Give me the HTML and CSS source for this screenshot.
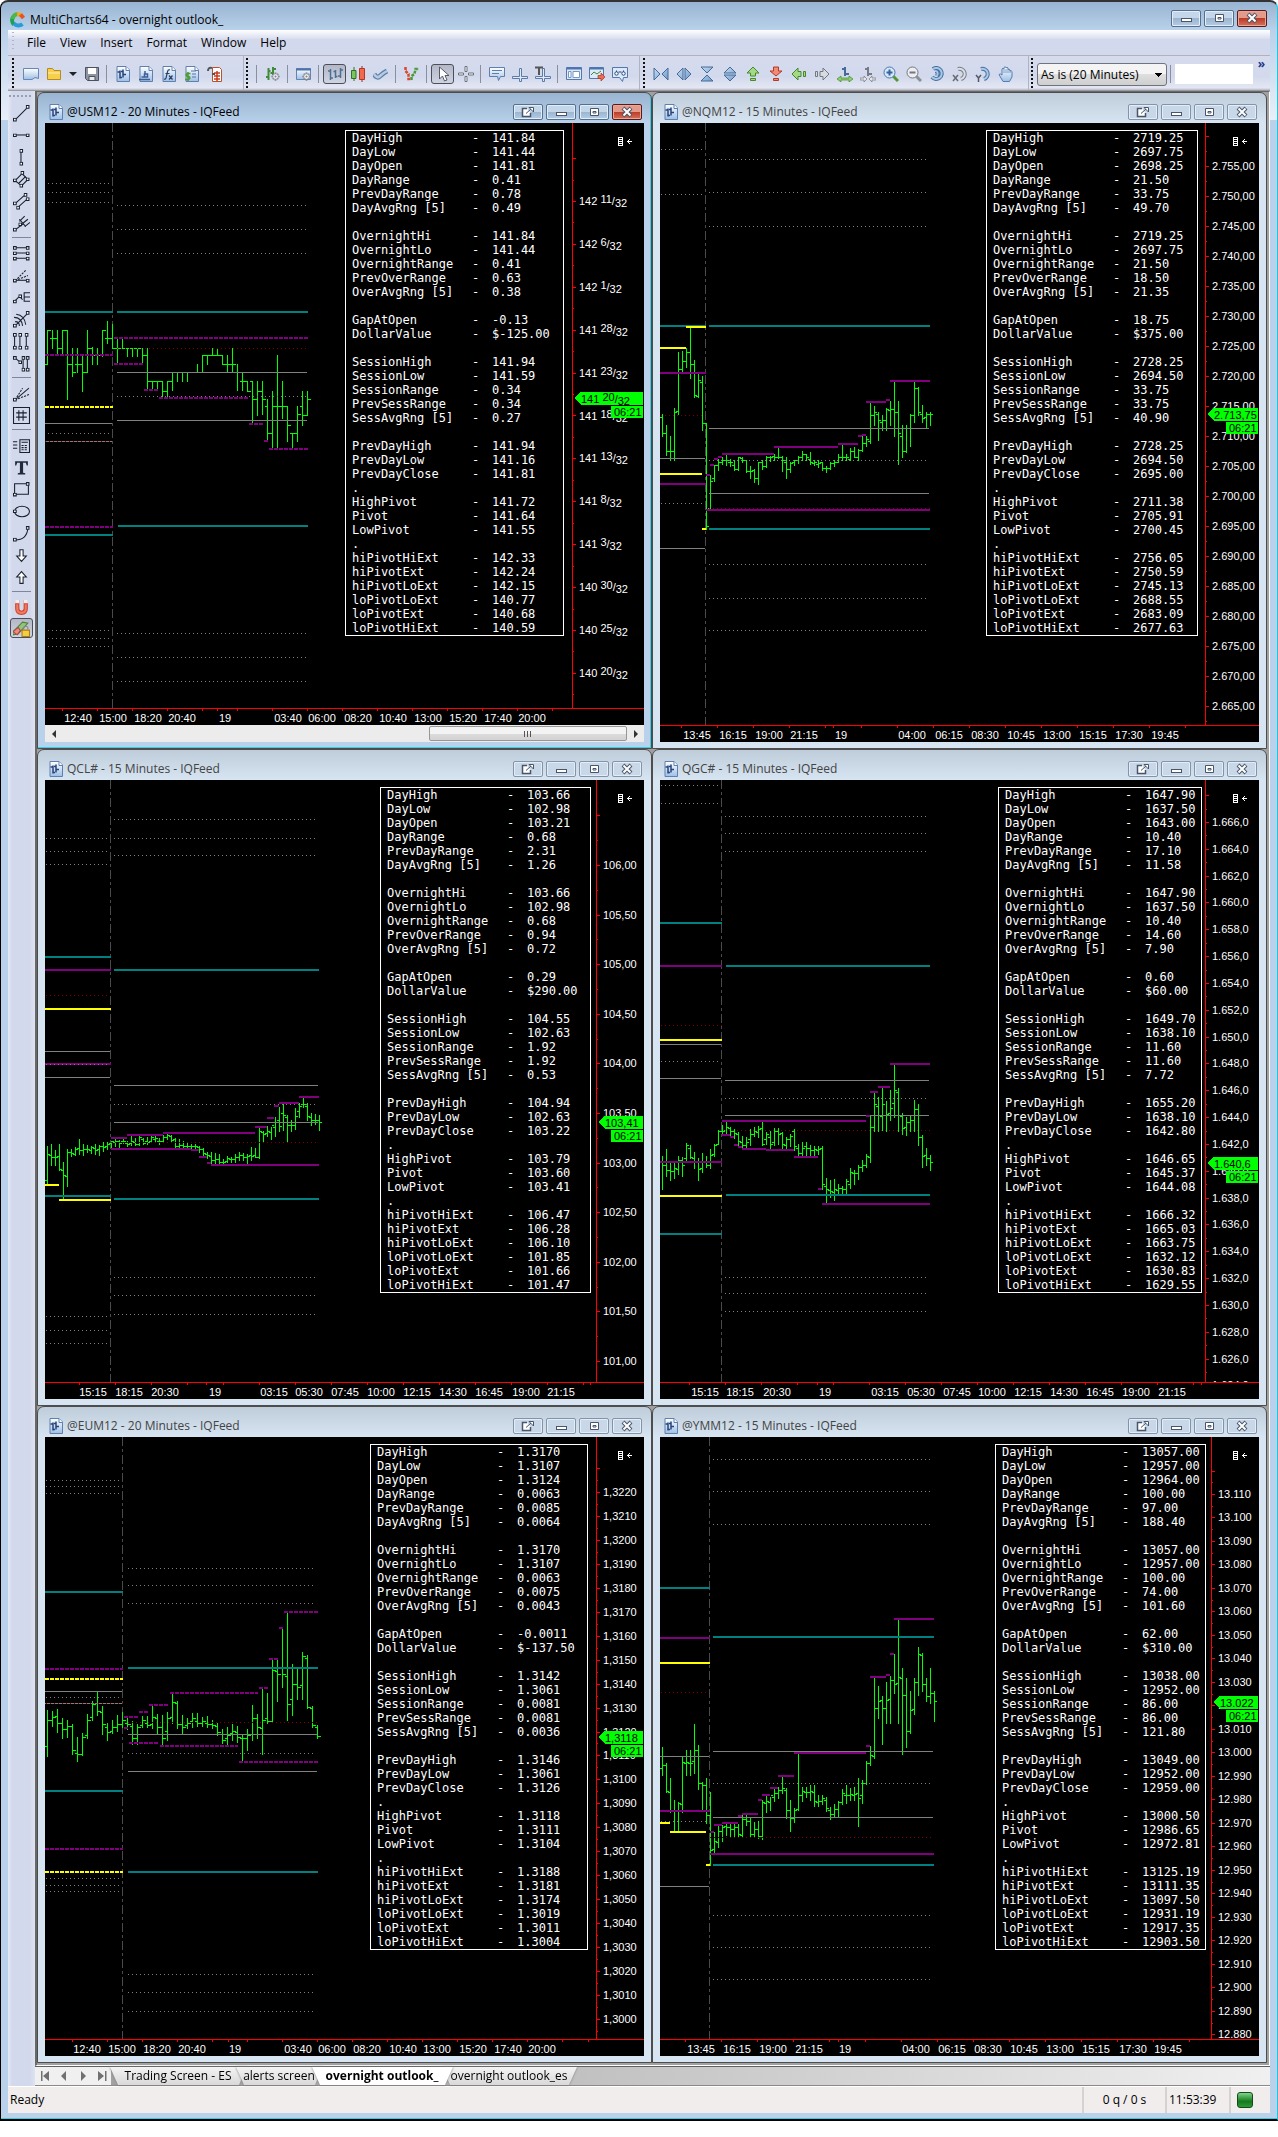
FILE: index.html
```html
<!DOCTYPE html>
<html lang="en">
<head>
<meta charset="utf-8">
<title>MultiCharts64 - overnight outlook_</title>
<link rel="stylesheet" href="styles.css">
</head>
<body>
<svg class="sprite" aria-hidden="true">
  <defs>
    <linearGradient id="blue" x2="0" y2="1"><stop offset="0" stop-color="#fff"/><stop offset="1" stop-color="#9dbfe6"/></linearGradient>
    <linearGradient id="steel" x2="1" y2="1"><stop offset="0" stop-color="#c8dcf2"/><stop offset="1" stop-color="#6f9ccb"/></linearGradient>
  </defs>
  <symbol id="logo" viewBox="0 0 16 16"><g fill="none" stroke-width="4"><path d="M4 12.5A6 6 0 0 1 3 5" stroke="#1fa05a"/><path d="M2.5 7A6 6 0 0 1 8 2" stroke="#4cb748"/><path d="M7 2.2A6 6 0 0 1 11.500 3.500" stroke="#f4a51c"/><path d="M10.500 2.500L13.500 6" stroke="#e8541e"/><path d="M4 11.500A6 6 0 0 0 12.500 12" stroke="#2a9bd6"/></g></symbol>
  <symbol id="page" viewBox="0 0 16 16"><path d="M2 .5h9l3.500 3.500v11.500H2z" fill="url(#blue)" stroke="#5f7fae"/><path d="M11 .5v4h3.500" fill="#fff" stroke="#5f7fae"/></symbol>
  <symbol id="chartdoc" viewBox="0 0 16 16"><use href="#page"/><path d="M5 4.500v8M2.500 6H5M5 11.500h2M8 3.500v8M8 8.500h3M6 5.500h2" stroke="#27447c" stroke-width="1.500"/></symbol>
  <symbol id="new" viewBox="0 0 16 16"><path d="M.5 2.500h15v10L12 11.500 9 13.500H.5z" fill="url(#blue)" stroke="#6787b5"/></symbol>
  <symbol id="open" viewBox="0 0 16 16"><path d="M1.500 13.500v-11h5l1.500 2h6.500v9z" fill="#f6cf4d" stroke="#b88a1e"/><path d="M2 7h12" stroke="#fff0b0"/></symbol>
  <symbol id="caret" viewBox="0 0 8 16"><path d="M0 6h8L4 10z" fill="#222"/></symbol>
  <symbol id="save" viewBox="0 0 16 16"><path d="M1.500 1.500h13v13h-11l-2-2z" fill="#8d93a0" stroke="#4c515c"/><path d="M4 2h8v6H4z" fill="#fff"/><path d="M5 10.500h6v4H5z" fill="#e8ebf0" stroke="#4c515c"/></symbol>
  <symbol id="signal" viewBox="0 0 16 16"><use href="#page"/><path d="M1 13.500h11M3.500 11h6v-3h-3v3M7 5v3" fill="none" stroke="#3c5f96" stroke-width="1.500"/></symbol>
  <symbol id="fx" viewBox="0 0 16 16"><use href="#page"/><path d="M9 4q-2-1-2.500 2L5 12q-.5 1.500-2 1M4.500 7.500h4M8 9.500l3.500 4M11.500 9.500L8 13.500" fill="none" stroke="#2a3d66" stroke-width="1.200"/></symbol>
  <symbol id="quote" viewBox="0 0 16 16"><use href="#page"/><path d="M7 5h5M8 8h4M8 11h4" stroke="#5875a8"/><path d="M6.500 7.500H3q-2 2 .5 3h1.500q2 2-.5 3H1M4 6v9" fill="none" stroke="#4f9a33" stroke-width="1.500"/></symbol>
  <symbol id="trade" viewBox="0 0 16 16"><path d="M5.500 1.500h7l2 2v12H5.500z" fill="#fff" stroke="#b5532f"/><path d="M7 7h6M7 10h6M7 13h6M10 5v10" stroke="#c63c22" stroke-width="1.500"/><path d="M1 5q0-4 4-3M5 8h3" fill="none" stroke="#555" stroke-width="2"/></symbol>
  <symbol id="gear" viewBox="0 0 16 16"><path d="M8 2v12M2 8h12M4 4l8 8M12 4l-8 8" stroke="#7c828c" stroke-width="2.500"/><circle cx="8" cy="8" r="4" fill="#f2f3f5" stroke="#7c828c"/><circle cx="8" cy="8" r="1.500" fill="#7c828c"/></symbol>
  <symbol id="symbolset" viewBox="0 0 16 16"><path d="M3.500 2v12M1 11h2.500M3.500 5h2M8 1v8M5.500 7H8M8 3h3" stroke="#3f8b36" stroke-width="2"/><use href="#gear" x="5" y="5" width="11" height="11"/></symbol>
  <symbol id="winset" viewBox="0 0 16 16"><path d="M.5 2.500h14v11H.5z" fill="url(#blue)" stroke="#6683ae"/><path d="M0 3.500h15" stroke="#4d73ad" stroke-width="2"/><use href="#gear" x="5" y="5" width="11" height="11"/></symbol>
  <symbol id="ohlc" viewBox="0 0 16 16"><path d="M3.500 3v11M1 5h2.500M3.500 12H6M8.500 4v8M8.500 5.500h-2M8.500 10.500h2M13.500 2v10M11 10h2.500M13.500 4H16" stroke="#4a7098" stroke-width="1.500"/></symbol>
  <symbol id="candle" viewBox="0 0 16 16"><path d="M4 1v14" stroke="#33701f"/><path d="M1.500 4.500h4.500v8H1.500z" fill="#7bc45f" stroke="#33701f"/><path d="M12 0v16" stroke="#9c2b1a"/><path d="M9.500 2.500h5v11h-5z" fill="#ef6a50" stroke="#b5371f"/></symbol>
  <symbol id="linech" viewBox="0 0 16 16"><path d="M1 8q3 5 6 2t7-5" fill="none" stroke="#5b7fa8" stroke-width="5"/><path d="M1 8q3 5 6 2t7-5" fill="none" stroke="#b8cbe2" stroke-width="2.500"/></symbol>
  <symbol id="zigzag" viewBox="0 0 16 16"><path d="M1.500 1v4l3 3v5h3" fill="none" stroke="#d9472f" stroke-width="2.500" stroke-dasharray="3 1"/><path d="M7.500 14v-4l3-2 1-5h3.500" fill="none" stroke="#4b9a37" stroke-width="2.500" stroke-dasharray="3 1"/></symbol>
  <symbol id="pointer" viewBox="0 0 16 16"><path d="M4.500 1v12l3-3 2 5 2.500-1-2-4.500H14z" fill="#fff" stroke="#555b66"/></symbol>
  <symbol id="cross" viewBox="0 0 16 16"><g fill="#fff" stroke="#6b7078"><path d="M7 .5h2v5H7zM7 10.500h2v5H7zM.5 7h5v2h-5zM10.500 7h5v2h-5z"/></g></symbol>
  <symbol id="note" viewBox="0 0 16 16"><path d="M.5 1.500h15v9h-4l-2 4-1-4h-8z" fill="url(#blue)" stroke="#5c7fae"/><path d="M3 4.500h10M3 7.500h7" stroke="#5c7fae"/></symbol>
  <symbol id="hand1" viewBox="0 0 16 16"><path d="M.5 10.500h7v-8h2v8h6v2h-6v3h-2v-3h-7z" fill="#dfeaf8" stroke="#5c7ba6"/></symbol>
  <symbol id="hand2" viewBox="0 0 16 16"><use href="#hand1"/><path d="M0 1.500h8M4 2v7" stroke="#555" stroke-width="2"/></symbol>
  <symbol id="layout" viewBox="0 0 16 16"><path d="M.5 1.500h15v12H.5z" fill="#dce9f8" stroke="#5577aa"/><path d="M1 2.500h14" stroke="#4c73b3" stroke-width="2"/><path d="M2.500 5.500h2.500v6H2.500zM7 5.500h6.500v6H7z" fill="#fff" stroke="#7795c2"/></symbol>
  <symbol id="export" viewBox="0 0 16 16"><path d="M.5 1.500h14v11H.5z" fill="#dce9f8" stroke="#5577aa"/><path d="M1 2.500h13" stroke="#4c73b3" stroke-width="2"/><path d="M2 9l3-3 3 2 4-3" fill="none" stroke="#3a8d36"/><path d="M9 9.500h3V7l4 4-4 4v-2.500H9z" fill="#ee6b4f" stroke="#a8351f" stroke-width=".7"/></symbol>
  <symbol id="find" viewBox="0 0 16 16"><path d="M.5 1.500h15v10h-4l-1 4-3-4h-7z" fill="#dce9f8" stroke="#5577aa"/><path d="M4.500 4.500v3M11.500 4.500v3M6.500 6h3" stroke="#27447c"/><circle cx="4.500" cy="7.500" r="1.700" fill="#fff" stroke="#27447c"/><circle cx="11.500" cy="7.500" r="1.700" fill="#fff" stroke="#27447c"/></symbol>
  <symbol id="squeezeh" viewBox="0 0 16 16"><path d="M1 2l6 6-6 6zM15 2L9 8l6 6z" fill="url(#steel)" stroke="#456b99"/></symbol>
  <symbol id="spreadh" viewBox="0 0 16 16"><path d="M7 2L1 8l6 6zM9 2l6 6-6 6z" fill="url(#steel)" stroke="#456b99"/></symbol>
  <symbol id="squeezev" viewBox="0 0 16 16"><path d="M2 1h12L8 7zM2 15h12L8 9z" fill="url(#steel)" stroke="#456b99"/></symbol>
  <symbol id="spreadv" viewBox="0 0 16 16"><path d="M2 7h12L8 1zM2 9h12l-6 6z" fill="url(#steel)" stroke="#456b99"/></symbol>
  <symbol id="upg" viewBox="0 0 16 16"><path d="M8 1l6 6h-3.500v3h-5V7H2zM5.500 12.500h5v2h-5z" fill="#a4da86" stroke="#438a2b"/></symbol>
  <symbol id="downr" viewBox="0 0 16 16"><path d="M8 10l6-5h-3.500V1h-5v4H2zM5.500 12.500h5v2h-5z" fill="#f28a76" stroke="#b43a25"/></symbol>
  <symbol id="leftg" viewBox="0 0 16 16"><path d="M1 8l6-6v3.500h3v5H7V14zM12.500 5.500h2v5h-2z" fill="#a4da86" stroke="#438a2b"/></symbol>
  <symbol id="rightx" viewBox="0 0 16 16"><path d="M15 8L9 2v3.500H6v5h3V14zM1.500 5.500h2v5h-2z" fill="#d8dbe0" stroke="#737981"/></symbol>
  <symbol id="barw" viewBox="0 0 16 16"><path d="M8 1v9M5 3h3M8 8h4" stroke="#456b99" stroke-width="2"/><path d="M0 13l4-3v2h8v-2l4 3-4 3v-2H4v2z" fill="#8fce72" stroke="#438a2b" stroke-width=".7"/></symbol>
  <symbol id="barn" viewBox="0 0 16 16"><path d="M8 1v9M5 3h3M8 8h4" stroke="#777c84" stroke-width="2"/><path d="M7 13L4 10v2H0v2h4v2zM9 13l3-3v2h4v2h-4v2z" fill="#e4e6ea" stroke="#737981" stroke-width=".7"/></symbol>
  <symbol id="zoomin" viewBox="0 0 16 16"><path d="M10 10l5 5" stroke="#4d9a35" stroke-width="3"/><circle cx="6.500" cy="6.500" r="5.500" fill="#d6e8f8" stroke="#4d76a8"/><path d="M3.500 6.500h6M6.500 3.500v6" stroke="#35629c" stroke-width="2"/></symbol>
  <symbol id="zoomout" viewBox="0 0 16 16"><path d="M10 10l5 5" stroke="#8b9098" stroke-width="3"/><circle cx="6.500" cy="6.500" r="5.500" fill="#eceef1" stroke="#73787f"/><path d="M3.500 6.500h6" stroke="#73787f" stroke-width="2"/></symbol>
  <symbol id="undo" viewBox="0 0 16 16"><path d="M4 3a5.500 5.500 0 1 1-1 8M6 5q4 0 2 5" fill="none" stroke="#47709f" stroke-width="4"/><path d="M4 3a5.500 5.500 0 1 1-1 8M6 5q4 0 2 5" fill="none" stroke="#a9c8e8" stroke-width="2"/></symbol>
  <symbol id="resetx" viewBox="0 0 16 16"><path d="M6 3a5 5 0 1 1 3 10" fill="none" stroke="#777c84" stroke-width="4"/><path d="M6 3a5 5 0 1 1 3 10" fill="none" stroke="#dcdfe4" stroke-width="2"/><path d="M1 9l5 6M6 9l-5 6" stroke="#666b73" stroke-width="1.500"/></symbol>
  <symbol id="resety" viewBox="0 0 16 16"><path d="M6 3a5 5 0 1 1 3 10" fill="none" stroke="#47709f" stroke-width="4"/><path d="M6 3a5 5 0 1 1 3 10" fill="none" stroke="#a9c8e8" stroke-width="2"/><path d="M1 9l2.500 3L6 9M3.500 12v4" fill="none" stroke="#555a62" stroke-width="1.500"/></symbol>
  <symbol id="palm" viewBox="0 0 16 16"><path d="M5 15.500L1 8.500q1-1.500 3 .5V3q1-1.500 2 0V1.500q1-1.500 2 0V2q1-1.500 2 0v1.500q1.500-1 2 .5v1q1.500-.5 2 .5V11l-2.500 4.500z" fill="url(#blue)" stroke="#557db0"/><path d="M6 3v4M8 3v4M10 3v4M12 4v3" stroke="#557db0" stroke-width=".7"/></symbol>
  <symbol id="k" viewBox="0 0 4 4" width="4" height="4"><path d="M.5.500h2.500v2.500h-2.500z" fill="#fff"/></symbol>
  <symbol id="t-trend" viewBox="0 0 16 16"><path d="M2 14L14 2"/><use href="#k" x="0" y="12"/><use href="#k" x="12" y="0"/></symbol>
  <symbol id="t-h" viewBox="0 0 16 16"><path d="M2 7.500h12"/><use href="#k" x="0" y="6"/><use href="#k" x="12" y="6"/></symbol>
  <symbol id="t-v" viewBox="0 0 16 16"><path d="M7.500 2v12"/><use href="#k" x="6" y="0"/><use href="#k" x="6" y="12"/></symbol>
  <symbol id="t-chan3" viewBox="0 0 16 16"><path d="M2 9l7-7M5 12l7-7M8 14l6-6M2 9l6 5M8 2l6 6"/><use href="#k" x="0" y="7"/><use href="#k" x="7" y="0"/><use href="#k" x="12" y="6"/><use href="#k" x="6" y="12"/></symbol>
  <symbol id="t-chan" viewBox="0 0 16 16"><path d="M2 10l9-8M4 14l10-9"/><use href="#k" x="0" y="8"/><use href="#k" x="10" y="0"/><use href="#k" x="12" y="4"/><use href="#k" x="3" y="12"/></symbol>
  <symbol id="t-fork" viewBox="0 0 16 16"><path d="M2 14l8-6M6 4l6 7M6 6l5-5M9 8l5-4M11 11l5-4"/><use href="#k" x="0" y="12"/><use href="#k" x="5" y="7"/></symbol>
  <symbol id="t-levels" viewBox="0 0 16 16"><path d="M2 2.500h12M2 7.500h12M2 12.500h12"/><use href="#k" x="0" y="1"/><use href="#k" x="12" y="1"/><use href="#k" x="0" y="6"/><use href="#k" x="12" y="6"/><use href="#k" x="0" y="11"/><use href="#k" x="12" y="11"/></symbol>
  <symbol id="t-fan" viewBox="0 0 16 16"><path d="M2 12.500h12"/><path d="M2 13L12 3M2 13l12-5" stroke-dasharray="2 1"/><use href="#k" x="0" y="11"/><use href="#k" x="12" y="11"/></symbol>
  <symbol id="t-ext" viewBox="0 0 16 16"><path d="M1 12l5-5 3 3M10 3.500h6M10 7.500h6M10 11.500h6M10.500 3v8"/><use href="#k" x="0" y="10"/><use href="#k" x="5" y="5"/></symbol>
  <symbol id="t-arcs" viewBox="0 0 16 16"><path d="M2 14L14 2M1 6q7 0 8 8M2 10q4 0 4 4M3 3q8 1 9 10"/><use href="#k" x="0" y="12"/><use href="#k" x="12" y="0"/></symbol>
  <symbol id="t-zones" viewBox="0 0 16 16"><path d="M1.500 2v12M6.500 2v12M12.500 2v12"/><use href="#k" x="0" y="0"/><use href="#k" x="5" y="0"/><use href="#k" x="11" y="0"/><use href="#k" x="0" y="12"/><use href="#k" x="5" y="12"/><use href="#k" x="11" y="12"/></symbol>
  <symbol id="t-zones2" viewBox="0 0 16 16"><path d="M2 3l5 4M9.500 3v11M13.500 3v11"/><use href="#k" x="0" y="1"/><use href="#k" x="5" y="5"/><use href="#k" x="8" y="12"/><use href="#k" x="12" y="12"/><use href="#k" x="8" y="1"/><use href="#k" x="12" y="1"/></symbol>
  <symbol id="t-gann" viewBox="0 0 16 16"><path d="M2 14L15 3"/><path d="M2 14L9 3M2 14l13-5" stroke-dasharray="2 1"/><use href="#k" x="0" y="12"/></symbol>
  <symbol id="t-grid" viewBox="0 0 16 16"><path d="M.5.500h15v15h-15zM5.500 3v10M9.500 3v10M3 5.500h10M3 9.500h10"/></symbol>
  <symbol id="t-info" viewBox="0 0 16 16"><path d="M0 4.500h4M0 7.500h4M0 10.500h4M6.500 2.500h9v12h-9zM8 5h6M8 8h2M11 8h2M8 10h2M11 10h2M8 12h2M11 12h2"/></symbol>
  <symbol id="t-text" viewBox="0 0 16 16"><path d="M2 2h12v4h-1l-1-2.500H9.500V13l2 .5v1h-7v-1l2-.5V3.500H4L3 6H2z" fill="#1f2b3d" stroke="none"/></symbol>
  <symbol id="t-rect" viewBox="0 0 16 16"><path d="M1.500 2.500h13v10h-13z"/><use href="#k" x="0" y="11"/><use href="#k" x="12" y="1"/></symbol>
  <symbol id="t-oval" viewBox="0 0 16 16"><ellipse cx="8.500" cy="8" rx="7" ry="5"/><use href="#k" x="0" y="6"/></symbol>
  <symbol id="t-arc" viewBox="0 0 16 16"><path d="M2 14q11 0 12-11"/><use href="#k" x="0" y="12"/><use href="#k" x="12" y="1"/></symbol>
  <symbol id="t-down" viewBox="0 0 16 16"><path d="M6.500 2.500h3v6h3L8 13.500 3.500 8.500h3z" fill="#fff"/></symbol>
  <symbol id="t-up" viewBox="0 0 16 16"><path d="M6.500 13.500h3v-6h3L8 2.500 3.500 7.500h3z" fill="#fff"/></symbol>
  <symbol id="t-magnet" viewBox="0 0 16 16"><path d="M4 1v8q0 4 4 4t4-4V1" fill="none" stroke="#d0432c" stroke-width="4"/><path d="M4 5v4q0 4 4 4t4-4V5" fill="none" stroke="#ef7b62" stroke-width="2"/><path d="M2 2.500h4M10 2.500h4" stroke="#eee" stroke-width="3"/></symbol>
  <symbol id="t-lock" viewBox="0 0 16 16"><path d="M0 11l9-9 5 1-9 10-5 1z" fill="#8fc67c" stroke="#50803d"/><path d="M0 11l5-4 2 3-3 4z" fill="#ee8a78" stroke="#a44"/><path d="M10 9V7q2-2.500 4 0v2" stroke="#888"/><path d="M8.500 9.500h7v6h-7z" fill="#f5cd45" stroke="#a97e13"/></symbol>
  <symbol id="w-pop" viewBox="0 0 14 12"><path d="M6 2.500H1.500v8h8V7" fill="#fff" stroke="#4a5668" stroke-width="1.500"/><path d="M5 7.500L10 3M8 1.500h4.500V6z" fill="#fff" stroke="#4a5668"/></symbol>
  <symbol id="w-min" viewBox="0 0 14 12"><rect x="2.500" y="6.500" width="10" height="3" fill="#fff" stroke="#4a5668"/></symbol>
  <symbol id="w-max" viewBox="0 0 14 12"><path d="M3.500 2.500h8v7h-8z" fill="#fff" stroke="#4a5668"/><path d="M6 5.500h3v1.500H6z" fill="#fff" stroke="#4a5668"/></symbol>
  <symbol id="w-close" viewBox="0 0 14 12"><path d="M3 2l8 8M11 2l-8 8" stroke="#4a5668" stroke-width="4"/><path d="M3.500 2.500l7 7M10.500 2.500l-7 7" stroke="#fff" stroke-width="2"/></symbol>
</svg>

<div class="app">
  <header class="titlebar">
    <svg class="icon"><use href="#logo"/></svg>
    <h1 class="title">MultiCharts64 - overnight outlook_</h1>
    <div class="winbtns">
      <button class="winbtn solid" aria-label="Minimize"><svg><use href="#w-min"/></svg></button>
      <button class="winbtn solid" aria-label="Restore"><svg><use href="#w-max"/></svg></button>
      <button class="winbtn close" aria-label="Close"><svg><use href="#w-close"/></svg></button>
    </div>
  </header>

  <nav class="menubar">
    <a href="#">File</a><a href="#">View</a><a href="#">Insert</a><a href="#">Format</a><a href="#">Window</a><a href="#">Help</a>
  </nav>

  <div class="toolbars">
    <div class="toolbar standard">
      <button aria-label="New"><svg class="icon"><use href="#new"/></svg></button>
      <button aria-label="Open"><svg class="icon"><use href="#open"/></svg></button>
      <button class="drop" aria-label="Open recent"><svg class="caret"><use href="#caret"/></svg></button>
      <button aria-label="Save"><svg class="icon"><use href="#save"/></svg></button>
      <i class="sep"></i>
      <button aria-label="Insert symbol"><svg class="icon"><use href="#chartdoc"/></svg></button>
      <button aria-label="Insert signal"><svg class="icon"><use href="#signal"/></svg></button>
      <button aria-label="Insert study"><svg class="icon"><use href="#fx"/></svg></button>
      <button aria-label="Quotes"><svg class="icon"><use href="#quote"/></svg></button>
      <button aria-label="Orders"><svg class="icon"><use href="#trade"/></svg></button>
    </div>
    <div class="toolbar charting">
      <i class="sep"></i>
      <button aria-label="Format symbol"><svg class="icon"><use href="#symbolset"/></svg></button>
      <i class="sep"></i>
      <button aria-label="Format window"><svg class="icon"><use href="#winset"/></svg></button>
      <i class="sep"></i>
      <button class="pressed" aria-label="Bars"><svg class="icon"><use href="#ohlc"/></svg></button>
      <button aria-label="Candles"><svg class="icon"><use href="#candle"/></svg></button>
      <button aria-label="Line"><svg class="icon"><use href="#linech"/></svg></button>
      <i class="sep"></i>
      <button aria-label="Strategy"><svg class="icon"><use href="#zigzag"/></svg></button>
      <i class="sep"></i>
      <button class="pressed" aria-label="Pointer"><svg class="icon"><use href="#pointer"/></svg></button>
      <button aria-label="Crosshair"><svg class="icon"><use href="#cross"/></svg></button>
      <i class="sep"></i>
      <button aria-label="Hint"><svg class="icon"><use href="#note"/></svg></button>
      <button aria-label="Mark bar"><svg class="icon"><use href="#hand1"/></svg></button>
      <button aria-label="Mark time"><svg class="icon"><use href="#hand2"/></svg></button>
      <i class="sep"></i>
      <button aria-label="Data window"><svg class="icon"><use href="#layout"/></svg></button>
      <button aria-label="Export chart"><svg class="icon"><use href="#export"/></svg></button>
      <button aria-label="Find"><svg class="icon"><use href="#find"/></svg></button>
    </div>
    <div class="toolbar scaling">
      <button aria-label="Squeeze bars"><svg class="icon"><use href="#squeezeh"/></svg></button>
      <button aria-label="Spread bars"><svg class="icon"><use href="#spreadh"/></svg></button>
      <button aria-label="Squeeze prices"><svg class="icon"><use href="#squeezev"/></svg></button>
      <button aria-label="Spread prices"><svg class="icon"><use href="#spreadv"/></svg></button>
      <button aria-label="Move up"><svg class="icon"><use href="#upg"/></svg></button>
      <button aria-label="Move down"><svg class="icon"><use href="#downr"/></svg></button>
      <button aria-label="Move left"><svg class="icon"><use href="#leftg"/></svg></button>
      <button aria-label="Move right"><svg class="icon"><use href="#rightx"/></svg></button>
      <button aria-label="Wider bars"><svg class="icon"><use href="#barw"/></svg></button>
      <button aria-label="Narrower bars"><svg class="icon"><use href="#barn"/></svg></button>
      <button aria-label="Zoom in"><svg class="icon"><use href="#zoomin"/></svg></button>
      <button aria-label="Zoom out"><svg class="icon"><use href="#zoomout"/></svg></button>
      <button aria-label="Undo zoom"><svg class="icon"><use href="#undo"/></svg></button>
      <button aria-label="Reset time scale"><svg class="icon"><use href="#resetx"/></svg></button>
      <button aria-label="Reset price scale"><svg class="icon"><use href="#resety"/></svg></button>
      <button aria-label="Pan"><svg class="icon"><use href="#palm"/></svg></button>
    </div>
    <div class="toolbar resolution">
      <select aria-label="Resolution"><option>As is (20 Minutes)</option></select>
      <i class="sep"></i>
      <input type="text" aria-label="Command line">
      <span class="more">»</span>
    </div>
  </div>

  <main class="workspace">
    <aside class="drawing">
      <button aria-label="Trend line"><svg class="icon"><use href="#t-trend"/></svg></button>
      <button aria-label="Horizontal line"><svg class="icon"><use href="#t-h"/></svg></button>
      <button aria-label="Vertical line"><svg class="icon"><use href="#t-v"/></svg></button>
      <button aria-label="Regression channel"><svg class="icon"><use href="#t-chan3"/></svg></button>
      <button aria-label="Parallel channel"><svg class="icon"><use href="#t-chan"/></svg></button>
      <button aria-label="Pitchfork"><svg class="icon"><use href="#t-fork"/></svg></button>
      <hr>
      <button aria-label="Retracement"><svg class="icon"><use href="#t-levels"/></svg></button>
      <button aria-label="Speed lines"><svg class="icon"><use href="#t-fan"/></svg></button>
      <button aria-label="Extension"><svg class="icon"><use href="#t-ext"/></svg></button>
      <button aria-label="Arcs"><svg class="icon"><use href="#t-arcs"/></svg></button>
      <button aria-label="Time zones"><svg class="icon"><use href="#t-zones"/></svg></button>
      <button aria-label="Trend time zones"><svg class="icon"><use href="#t-zones2"/></svg></button>
      <hr>
      <button aria-label="Gann fan"><svg class="icon"><use href="#t-gann"/></svg></button>
      <button aria-label="Gann square"><svg class="icon"><use href="#t-grid"/></svg></button>
      <hr>
      <button aria-label="Calculator"><svg class="icon"><use href="#t-info"/></svg></button>
      <button aria-label="Text"><svg class="icon"><use href="#t-text"/></svg></button>
      <button aria-label="Rectangle"><svg class="icon"><use href="#t-rect"/></svg></button>
      <button aria-label="Ellipse"><svg class="icon"><use href="#t-oval"/></svg></button>
      <button aria-label="Arc"><svg class="icon"><use href="#t-arc"/></svg></button>
      <button aria-label="Arrow down"><svg class="icon"><use href="#t-down"/></svg></button>
      <button aria-label="Arrow up"><svg class="icon"><use href="#t-up"/></svg></button>
      <hr>
      <button aria-label="Magnet"><svg class="icon"><use href="#t-magnet"/></svg></button>
      <button class="pressed" aria-label="Keep drawing"><svg class="icon"><use href="#t-lock"/></svg></button>
    </aside>

    <div class="desk">
      <div class="windows" id="windows"></div>
      <div class="tabs">
        <div class="tabnav">
          <button aria-label="First"><svg viewBox="0 0 10 10"><path d="M1 0h1.500v10H1zM9 0v10L3 5z"/></svg></button>
          <button aria-label="Previous"><svg viewBox="0 0 10 10"><path d="M7 0v10L2 5z"/></svg></button>
          <button aria-label="Next"><svg viewBox="0 0 10 10"><path d="M3 0v10l5-5z"/></svg></button>
          <button aria-label="Last"><svg viewBox="0 0 10 10"><path d="M8 0h1.500v10H8zM1 0v10l6-5z"/></svg></button>
        </div>
        <button class="tab t1">Trading Screen - ES</button>
        <button class="tab t2">alerts screen</button>
        <button class="tab t3 current">overnight outlook_</button>
        <button class="tab t4">overnight outlook_es</button>
      </div>
    </div>
  </main>

  <footer class="status">
    <span class="ready">Ready</span>
    <span class="pane rate">0 q / 0 s</span>
    <span class="pane clock">11:53:39</span>
    <span class="pane link"><i class="led"></i></span>
  </footer>
</div>

<template id="window-template">
  <section class="window">
    <header class="caption">
      <svg class="icon"><use href="#chartdoc"/></svg>
      <h2 class="title"></h2>
      <div class="winbtns">
        <button class="winbtn" aria-label="Detach"><svg><use href="#w-pop"/></svg></button>
        <button class="winbtn" aria-label="Minimize"><svg><use href="#w-min"/></svg></button>
        <button class="winbtn" aria-label="Maximize"><svg><use href="#w-max"/></svg></button>
        <button class="winbtn x" aria-label="Close"><svg><use href="#w-close"/></svg></button>
      </div>
    </header>
    <div class="client">
      <div class="panes">
        <div class="plot"><svg></svg><table class="stats"><tbody></tbody></table></div>
        <svg class="prices"></svg>
      </div>
      <svg class="times"></svg>
    </div>
  </section>
</template>
<script src="charts.js"></script>
</body>
</html>
```

FILE: styles.css
```css
* { box-sizing: border-box; }

body {
  margin: 0;
  background: #fff;
  font-family: "Open Sans", "Noto Sans", sans-serif;
  font-size: 12px;
  color: #000;
}

button, select, input { font: inherit; color: inherit; }
button { padding: 0; border: 0; background: none; }
h1, h2 { margin: 0; font-size: 12px; font-weight: 400; }
svg { display: block; }
.sprite { position: absolute; width: 0; height: 0; }
.icon { width: 16px; height: 16px; flex: none; fill: none; }

/* application frame */
.app {
  padding: 0 7px 6px;
  border: 1px solid #000;
  border-top: 2px solid #333;
  border-right-color: #1cc8e0;
  border-bottom: 2px solid #000;
  border-radius: 8px 8px 0 0;
  box-shadow: inset 0 -1px #2fd0e6;
  background:
    linear-gradient(#98b4d2, #b9d1ea 28px, #dfeaf7 100px, #e6f0fa 118px, transparent 118px),
    #b9d1ea;
}

.titlebar {
  display: flex;
  align-items: center;
  height: 28px;
  padding: 8px 3px 0 2px;
  gap: 4px;
}
.titlebar .title { flex: 1; padding-bottom: 1px; }
.titlebar .winbtns { padding-bottom: 4px; }
.titlebar .winbtns .winbtn { height: 17px; }

.winbtns { display: flex; gap: 3px; }
.winbtn {
  display: flex;
  align-items: center;
  justify-content: center;
  width: 30px;
  height: 16px;
  border: 1px solid #8494a8;
  border-radius: 2px;
  box-shadow: inset 0 0 0 1px #e3edf7;
  background: #c9d8e8;
}
.winbtn svg { width: 14px; height: 12px; }
.winbtn.solid, .active .winbtn {
  border-color: #55708f;
  background: linear-gradient(#c4d6e9 50%, #9bb5d0 50%, #b4cce4);
}
.winbtn.close, .active .winbtn.x {
  border-color: #5b1a1a;
  box-shadow: inset 0 0 0 1px #e9a79b;
  background: linear-gradient(#e39a8b 48%, #bb3b27 50%, #d5735a);
}

.menubar {
  display: flex;
  align-items: center;
  gap: 14px;
  height: 26px;
  padding: 0 19px;
  border-bottom: 1px solid #b2b2ba;
  background:
    repeating-linear-gradient(#b0b4c4 0 1px, transparent 1px 4px) 4px 2px / 2px 20px no-repeat,
    linear-gradient(#fff, #d8ddef 9px, #d3d9ec 9px);
}
.menubar a { color: #000; text-decoration: none; }

/* toolbars */
.toolbars {
  display: flex;
  height: 35px;
  border-bottom: 1px solid #9a9aa2;
  background: linear-gradient(#d6dbee, #d3d9ec 60%, #e3e7f4 94%, #b8b8c0);
}
.toolbar {
  display: flex;
  align-items: center;
  height: 34px;
  padding-top: 2px;
  border-right: 1px solid #b0b3c2;
  background: repeating-linear-gradient(#111 0 2px, transparent 2px 4px) 4px 2px / 2px 32px no-repeat;
}
.toolbar button {
  display: flex;
  align-items: center;
  justify-content: center;
  width: 23px;
  height: 20px;
}
.toolbar .drop { width: 15px; }
.caret { width: 8px; height: 16px; }
.toolbar .pressed, .drawing .pressed {
  border: 1px solid #4c4f58;
  border-radius: 3px;
  background: linear-gradient(#b3b7c6, #d0d4e2);
}
.sep { flex: none; width: 8px; height: 18px; background: linear-gradient(#8b8f9c, #8b8f9c) 3px 0 / 1px 18px no-repeat; }
.standard { padding-left: 11px; width: 236px; }
.charting { padding-left: 9px; width: 396px; background-position-x: 2px; }
.scaling { padding-left: 9px; width: 389px; background-position-x: 3px; }
.resolution { flex: 1; padding-left: 8px; border: 0; background-position-x: 2px; }
.resolution select {
  width: 130px;
  height: 23px;
  padding: 0 3px;
  appearance: none;
  border: 1px solid #70747c;
  border-radius: 3px;
  background:
    linear-gradient(to top right, transparent 50%, #000 50%) 117px 9px / 4px 4px no-repeat,
    linear-gradient(to top left, transparent 50%, #000 50%) 121px 9px / 4px 4px no-repeat,
    linear-gradient(#f4f4f4 50%, #dedede 50%, #cfcfcf);
}
.resolution input { width: 78px; height: 20px; padding: 0 3px; border: 1px solid #fff; background: #fff; }
.more { flex: 1; align-self: flex-start; text-align: center; line-height: 12px; color: #1d3a8a; font-weight: 700; }

/* drawing tools strip */
.workspace { display: flex; }
.drawing {
  flex: none;
  width: 27px;
  padding: 11px 2px 0;
  background:
    repeating-linear-gradient(90deg, #9aa0b4 0 2px, transparent 2px 4px) 1px 4px / 24px 2px no-repeat,
    linear-gradient(90deg, #e6eaf5, #d3d9ec 4px, #d3d9ec 22px, #dfe3f1);
}
.drawing button {
  display: flex;
  align-items: center;
  justify-content: center;
  width: 23px;
  height: 22px;
}
.drawing .icon { width: 17px; height: 17px; stroke: #18212f; }
.drawing .pressed { height: 20px; }
.drawing hr { width: 19px; height: 1px; margin: 3px auto 4px; border: 0; background: #80859a; }

/* chart windows */
.desk { flex: 1; min-width: 0; }
.windows {
  display: grid;
  grid-template-columns: 1fr 1fr;
  padding: 0 2px 2px 0;
  border: 1px solid #696969;
  border-left-width: 2px;
  border-bottom-color: #fff;
  border-right-color: #fff;
  background: #a0a0a0;
}
.window {
  border: 1px solid #4d4d4d;
  border-radius: 7px 7px 0 0;
  padding: 0 7px 6px;
  background: linear-gradient(#bfcddb, #d7e4f2 30px);
}
.window.active {
  background: linear-gradient(#99b4d1, #b9d1ea 30px);
  box-shadow: inset -1px -1px #35cfe6;
}
.caption { display: flex; align-items: center; gap: 3px; height: 30px; padding: 7px 2px 0 2px; }
.caption .title { flex: 1; color: #444; }
.active .title { color: #000; }
.caption .icon { margin-left: 1px; }

.client { display: flex; flex-direction: column; height: 619px; background: #000; }
.panes { flex: 1; min-height: 0; display: flex; }
.plot { position: relative; flex: 1; min-width: 0; }
.plot > svg { width: 100%; height: 100%; }
.prices { flex: none; height: 100%; border-left: 1px solid #f00; }
.times { flex: none; width: 100%; height: 17px; border-top: 1px solid #f00; }
.prices text, .times text { font-family: "Liberation Sans", Arial, sans-serif; font-size: 11px; fill: #fff; }
.prices .tagtext { fill: #000; }
.times text { text-anchor: middle; }
.plot path, .prices path, .times path { fill: none; shape-rendering: crispEdges; }
.tick { stroke: #f00; }
.bar { stroke: #0f0; }
.teal { stroke: #008080; stroke-width: 2; }
.purple { stroke: #800080; stroke-width: 2; }
.yellow { stroke: #ff0; stroke-width: 2; }
.dashed { stroke-dasharray: 4 1; }
.gray { stroke: #808080; }
.dots { stroke: #808080; stroke-dasharray: 1 3; }
.close-dots { stroke: #800000; stroke-dasharray: 1 3; }
.session { stroke: #4a4a4a; stroke-dasharray: 9 3 3 3; }
.prices .tag { fill: #0f0; }

/* statistics box, laid over the plot */
.stats {
  position: absolute;
  top: 7px;
  border: 1px solid #fff;
  border-collapse: separate;
  border-spacing: 0;
  table-layout: fixed;
  background: #000;
  color: #fff;
  font: 12px/14px "DejaVu Sans Mono", monospace;
  white-space: pre;
}
.stats td { height: 14px; padding: 0; overflow: visible; }
.stats .name { width: 126px; padding-left: 6px; }
.stats .dash { width: 20px; }

.scroll { flex: none; display: flex; align-items: center; height: 17px; background: #ececec; }
.scroll button { width: 17px; height: 17px; display: flex; align-items: center; justify-content: center; }
.scroll svg { width: 4px; height: 8px; fill: #333; }
.track { flex: 1; height: 15px; display: flex; justify-content: flex-end; }
.thumb {
  width: 35%;
  border: 1px solid #979797;
  border-radius: 2px;
  background:
    repeating-linear-gradient(90deg, #555 0 1px, transparent 1px 3px) center / 8px 6px no-repeat,
    linear-gradient(#f3f3f3 50%, #dcdcdc 50%, #d2d2d2);
}

/* workspace tabs */
.tabs {
  display: flex;
  height: 20px;
  border-top: 1px solid #606060;
  border-bottom: 1px solid #8a8a8a;
  background: linear-gradient(90deg, #9c9c9c, #f0f0f0);
}
.tabnav { display: flex; width: 76px; margin-right: 4px; justify-content: space-around; align-items: center; background: #f0f0f0; }
.tabnav svg { width: 10px; height: 10px; fill: #707070; }
.tab {
  position: relative;
  z-index: 0;
  height: 18px;
  line-height: 16px;
  text-align: center;
  filter: drop-shadow(0 0 1px #777);
}
.tab::before {
  content: "";
  position: absolute;
  inset: 0 -6px 0 -5px;
  z-index: -1;
  background: linear-gradient(#f4f4f4, #d9d9d9);
  clip-path: polygon(0 0, 100% 0, calc(100% - 8px) 100%, 8px 100%);
}
.t1 { width: 126px; }
.t2 { width: 76px; }
.t3 { width: 130px; }
.t4 { width: 124px; }
.tab.current { z-index: 1; font-weight: 700; }
.tab.current::before { background: #fff; }

.status {
  display: flex;
  align-items: stretch;
  height: 27px;
  border-top: 1px solid #fff;
  background: #f0edec;
  line-height: 26px;
}
.ready { flex: 1; padding-left: 2px; }
.pane { border-left: 2px solid #d5d2d1; }
.rate { width: 83px; text-align: center; }
.clock { width: 64px; padding-left: 2px; }
.link { display: flex; align-items: center; width: 41px; padding-left: 6px; }
.led {
  width: 16px;
  height: 16px;
  border: 1px solid #15491a;
  border-radius: 3px;
  background: linear-gradient(#7fd48a, #157a1d 60%, #2a9a33);
}
```

FILE: charts.js
```js
// Each chart stores bars and levels in its own drawing units;
// sx/sy are units per pixel and ox/oy is the pixel origin of the plot.
const LABELS = ['DayHigh', 'DayLow', 'DayOpen', 'DayRange', 'PrevDayRange', 'DayAvgRng [5]', '',
  'OvernightHi', 'OvernightLo', 'OvernightRange', 'PrevOverRange', 'OverAvgRng [5]', '',
  'GapAtOpen', 'DollarValue', '',
  'SessionHigh', 'SessionLow', 'SessionRange', 'PrevSessRange', 'SessAvgRng [5]', '',
  'PrevDayHigh', 'PrevDayLow', 'PrevDayClose', '.',
  'HighPivot', 'Pivot', 'LowPivot', '.',
  'hiPivotHiExt', 'hiPivotExt', 'hiPivotLoExt', 'loPivotLoExt', 'loPivotExt', 'loPivotHiExt'];

// Level codes: T teal, M purple, D purple dashed, Y yellow, Z yellow dashed, G gray, o dotted, r dotted close.
const STYLES = { T: 'teal', M: 'purple', D: 'purple dashed', Y: 'yellow', Z: 'yellow dashed', G: 'gray', o: 'dots', r: 'close-dots' };

const range = (start, step, count) => Array.from({ length: count }, (_, i) => Math.round(start + step * i));

const CHARTS = [
  {
    title: '@USM12 - 20 Minutes - IQFeed', active: true, scroll: true,
    sx: 3, sy: 2.376, ox: 45, oy: 33, step: 5, session: 337,
    axis: 72, box: { right: 8, width: 219 },
    stats: '141.84 141.44 141.81 0.41 0.78 0.49 141.84 141.44 0.41 0.63 0.38 -0.13 $-125.00 141.94 141.59 0.34 0.34 0.27 141.94 141.16 141.81 141.72 141.64 141.55 142.33 142.24 142.15 140.77 140.68 140.59',
    bars: '570,652,652,571 570,613,590,590 570,628,590,612 570,628,612,571 570,733,571,652 612,680,652,671 612,671,652,652 630,714,652,671 570,671,671,612 610,652,612,630 612,652,630,630 570,632,630,571 549,600,590,590 556,612,590,612 592,648,612,612 592,612,612,612 612,631,612,612 612,632,612,612 612,631,612,612 612,648,612,630 612,712,630,692 692,709,692,692 692,709,692,692 692,730,692,714 692,730,714,692 671,712,692,671 671,692,671,671 671,692,671,671 671,692,671,671 671,671,671,671 650,671,671,671 630,671,671,630 630,652,630,630 613,630,630,630 613,630,630,630 630,652,630,652 630,671,652,652 613,671,652,652 652,712,671,671 671,712,692,692 692,714,692,714 692,792,692,733 692,773,733,714 692,771,714,733 733,833,752,814 714,851,814,752 630,851,752,752 692,780,752,752 752,833,752,795 814,851,814,814 752,833,814,771 714,795,752,773 714,773,773,733',
    lines: 'o,144,327,221 o,144,327,243 o,144,327,265 o,351,920,274 o,351,920,331 o,351,920,388 T,135,339,527 T,352,924,527 D,343,924,590 r,352,924,612 D,343,430,651 G,351,921,669 o,352,920,726 G,351,921,783 D,432,474,712 D,477,745,732 D,747,788,794 D,792,803,834 D,807,924,853 D,135,339,630 Z,135,339,753 G,135,336,792 o,144,330,814 G,135,336,833 r,135,339,833 D,135,339,1038 T,135,339,1057 T,354,924,1035 o,144,327,1282 o,144,327,1301 o,144,327,1322 o,351,920,1291 o,351,920,1348 o,351,920,1405',
    times: '12:40@33 15:00@68 18:20@103 20:40@137 19@180 03:40@243 06:00@277 08:20@313 10:40@348 13:00@383 15:20@418 17:40@453 20:00@487',
    ticks: [...range(17, 35, 5), 172, ...range(192, 35, 10)],
    prices: ['142 11', '142 6', '142 1', '141 28', '141 23', '141 18', '141 13', '141 8', '141 3', '140 30', '140 25', '140 20'],
    first: 78, gap: 42.9, last: '141 20', tagY: 275, fraction: true
  },
  {
    title: '@NQM12 - 15 Minutes - IQFeed',
    sx: 3, sy: 2.376, ox: 20, oy: 33, step: 4, session: 197,
    axis: 54, box: { right: 7, width: 212 },
    stats: '2719.25 2697.75 2698.25 21.50 33.75 49.70 2719.25 2697.75 21.50 18.50 21.35 18.75 $375.00 2728.25 2694.50 33.75 33.75 40.90 2728.25 2694.50 2695.00 2711.38 2705.91 2700.45 2756.05 2750.59 2745.13 2688.55 2683.09 2677.63',
    bars: '770,822,778,814 795,868,816,857 822,880,857,857 755,879,857,764 622,771,762,664 619,668,664,643 612,657,643,622 564,685,622,650 642,730,652,724 675,730,728,690 680,808,693,792 792,1042,792,1037 915,993,992,928 891,928,923,891 876,902,891,885 871,888,885,880 865,892,880,880 876,893,883,885 878,902,890,900 872,902,900,873 872,885,875,878 878,908,880,906 893,922,906,905 900,931,902,921 885,935,923,885 880,900,885,893 869,895,893,871 869,882,871,871 865,878,870,873 850,875,873,873 869,905,871,878 871,921,883,900 883,908,900,886 878,890,885,880 870,886,880,871 858,878,871,866 866,880,866,873 860,888,876,884 878,892,886,885 880,895,888,886 885,902,885,898 893,908,898,899 885,900,899,886 880,893,886,883 865,885,883,873 843,880,873,873 866,880,873,873 850,880,876,857 848,872,857,872 852,880,872,855 823,857,855,838 823,845,838,830 743,838,833,773 750,795,773,766 764,831,770,785 773,808,790,783 755,808,785,758 738,795,760,759 693,823,759,766 740,888,766,816 795,873,822,857 797,859,857,802 769,845,802,773 693,788,773,709 706,773,709,766 748,788,770,780 764,802,778,771 764,797,771,771',
    lines: 'o,63,187,141 o,63,187,247 o,207,860,165 o,207,860,243 o,207,860,322 T,60,198,560 T,208,870,560 Y,138,198,564 Y,60,137,613 M,60,198,672 r,63,187,773 G,60,195,875 Y,60,186,912 M,60,198,936 o,63,187,982 Y,186,198,1043 G,60,195,1089 M,197,209,914 M,210,222,891 M,222,233,876 M,234,245,872 M,246,401,864 M,402,593,848 M,594,653,841 M,654,665,822 M,666,677,819 M,678,737,741 M,738,749,737 M,750,870,691 G,207,867,804 o,207,860,880 G,207,867,958 r,207,870,992 M,198,870,997 T,208,870,1043 o,207,860,1127 o,207,860,1206 o,207,860,1284',
    times: '13:45@37 16:15@73 19:00@109 21:15@144 19@181 04:00@252 06:15@289 08:30@325 10:45@361 13:00@397 15:15@433 17:30@469 19:45@505',
    ticks: [...range(21, 36, 5), 173, ...range(201, 36, 10)],
    prices: range(2755, -5, 19).map(v => `${v / 1000 | 0}.${v % 1000},00`),
    first: 43, gap: 30.02, last: '2.713,75', tagY: 291
  },
  {
    title: 'QCL# - 15 Minutes - IQFeed',
    sx: 2.376, sy: 2.376, ox: 45, oy: 30, step: 4, session: 262,
    axis: 48, box: { right: 5, width: 211 },
    stats: '103.66 102.98 103.21 0.68 2.31 1.26 103.66 102.98 0.68 0.94 0.72 0.29 $290.00 104.55 102.63 1.92 1.92 0.53 104.94 102.63 103.22 103.79 103.60 103.41 106.47 106.28 106.10 101.85 101.66 101.47',
    bars: '940,1030,1022,960 937,985,962,968 950,985,966,968 936,998,965,995 978,1068,997,1010 948,1036,1012,955 948,965,955,958 943,963,960,948 924,960,945,950 936,963,950,948 938,955,947,947 940,957,950,943 936,960,945,950 938,962,948,940 932,952,942,943 932,948,940,935 928,946,933,930 925,942,932,929 926,946,930,934 922,934,930,928 930,940,933,936 918,938,934,930 921,938,932,935 915,938,935,920 922,937,925,933 920,935,930,932 915,932,930,920 918,932,925,922 922,936,928,930 914,932,930,920 910,925,920,915 915,930,916,926 922,948,925,942 925,948,940,938 930,948,938,940 934,945,940,940 936,948,940,940 935,948,942,942 940,955,943,948 945,965,948,958 955,970,960,962 955,982,965,975 958,984,975,972 960,985,972,980 972,985,978,978 964,980,976,970 966,980,972,972 960,978,972,966 955,975,966,962 958,975,962,968 960,983,968,965 943,975,962,964 945,968,962,966 898,970,966,905 905,932,907,912 893,918,910,905 895,925,908,890 872,916,895,885 848,905,880,893 842,902,862,868 868,930,872,892 880,905,890,892 850,900,892,870 838,872,858,845 826,848,842,840 838,880,845,870 862,892,872,878 865,888,880,880 868,902,878,885',
    lines: 'o,109,254,210 o,109,254,241 o,109,254,272 o,271,749,163 o,271,749,208 o,271,749,250 T,107,264,491 M,107,264,522 T,272,758,522 r,109,254,583 Y,107,264,615 G,107,261,714 M,107,264,746 o,109,254,746 G,107,261,778 G,271,755,797 M,710,758,825 M,662,710,838 M,652,662,846 M,634,652,874 M,606,634,896 M,387,606,910 M,302,387,914 M,264,302,921 o,271,749,840 G,271,755,885 r,264,758,932 M,264,455,948 M,455,473,951 M,473,492,967 M,492,501,982 M,501,758,986 Y,107,140,1033 T,107,264,1059 Y,140,264,1069 T,272,758,1067 o,271,749,1251 o,271,749,1296 o,271,749,1340 o,109,254,1346 o,109,254,1377 o,109,254,1408',
    times: '15:15@48 18:15@84 20:30@120 19@170 03:15@229 05:30@264 07:45@300 10:00@336 12:15@372 14:30@408 16:45@444 19:00@481 21:15@516',
    ticks: [34, 70, 106, 142, 161, ...range(178, 36, 11), 545],
    prices: range(10600, -50, 11).map(v => `${v / 100 | 0},${String(v % 100).padStart(2, '0')}`),
    first: 85, gap: 49.6, last: '103,41', tagY: 342
  },
  {
    title: 'QGC# - 15 Minutes - IQFeed',
    sx: 2.458, sy: 2.376, ox: 20, oy: 30, step: 4, session: 201,
    axis: 54, box: { right: 3, width: 204 },
    stats: '1647.90 1637.50 1643.00 10.40 17.10 11.58 1647.90 1637.50 10.40 14.60 7.90 0.60 $60.00 1649.70 1638.10 11.60 11.60 7.72 1655.20 1638.10 1642.80 1646.65 1645.37 1644.08 1666.32 1665.03 1663.75 1632.12 1630.83 1629.55',
    bars: '965,1042,980,985 948,1012,985,998 980,1022,998,1000 976,1018,1000,992 965,1008,995,975 968,1012,975,985 933,975,970,938 938,970,945,968 956,992,970,978 970,1022,980,995 958,1003,992,978 965,990,978,985 948,992,985,962 936,965,960,938 903,937,936,905 890,915,905,905 884,910,903,896 895,917,897,905 900,922,905,910 908,938,912,930 918,945,932,938 920,948,938,932 900,938,925,912 895,918,912,905 893,920,908,900 883,938,897,935 908,935,925,912 905,945,920,935 898,938,932,905 897,935,905,912 908,945,910,935 920,945,938,925 912,940,925,918 900,950,905,940 936,968,945,958 932,965,958,945 932,965,942,945 938,962,945,950 940,965,950,948 940,960,950,948 942,1042,945,1030 1018,1075,1035,1042 1022,1062,1045,1048 1020,1070,1050,1042 1030,1052,1045,1040 1035,1055,1040,1042 1020,1055,1042,1025 993,1040,1030,1003 998,1032,1005,1005 985,1020,1005,990 975,1000,990,985 960,990,985,965 870,980,968,895 815,905,895,842 825,905,845,868 800,903,870,842 835,905,868,865 808,880,862,850 747,872,838,808 802,905,812,868 863,912,870,898 872,915,895,885 868,905,885,878 832,905,878,852 842,938,852,920 915,990,920,965 945,985,962,970 962,998,970,980',
    lines: 'o,51,193,82 o,51,193,125 o,210,705,158 o,210,705,198 o,210,705,240 T,49,202,411 M,49,202,513 T,211,713,513 r,51,202,654 Y,49,202,689 G,49,199,699 o,51,193,740 G,49,199,780 M,614,713,746 G,209,710,785 M,585,614,800 M,565,585,812 o,210,705,828 G,209,710,868 M,555,565,870 M,202,555,881 r,210,713,904 M,202,221,914 M,221,231,919 M,231,241,938 M,241,251,944 M,251,310,948 M,310,378,951 M,378,437,967 M,437,447,1043 M,447,713,1078 M,49,202,978 Y,49,202,1059 T,211,713,1057 T,49,202,1149 o,210,705,1251 o,210,705,1291 o,210,705,1332',
    times: '15:15@45 18:15@80 20:30@117 19@165 03:15@225 05:30@261 07:45@297 10:00@332 12:15@368 14:30@404 16:45@440 19:00@476 21:15@512',
    ticks: [29, 65, 101, 137, 157, ...range(173, 36, 11), 541],
    prices: range(1666, -2, 22).map(v => `${v / 1000 | 0}.${v % 1000},0`),
    first: 42, gap: 26.83, last: '1.640,6', tagY: 383
  },
  {
    title: '@EUM12 - 20 Minutes - IQFeed',
    sx: 2.376, sy: 2.34, ox: 45, oy: 37, step: 5, session: 291,
    axis: 48, box: { right: 8, width: 218 },
    stats: '1.3170 1.3107 1.3124 0.0063 0.0085 0.0064 1.3170 1.3107 0.0063 0.0075 0.0043 -0.0011 $-137.50 1.3142 1.3061 0.0081 0.0081 0.0036 1.3146 1.3061 1.3126 1.3118 1.3111 1.3104 1.3188 1.3181 1.3174 1.3019 1.3011 1.3004',
    bars: '725,832,810,748 728,762,748,742 722,778,740,755 745,790,755,770 748,788,770,762 758,828,762,818 788,845,826,828 780,830,828,788 735,792,785,748 705,748,742,712 683,738,710,728 715,782,730,758 755,795,765,778 748,780,775,765 738,775,765,758 730,765,758,748 742,770,755,758 752,805,762,790 758,805,790,765 740,765,760,748 740,765,755,760 715,768,758,742 735,780,745,765 738,805,765,790 730,795,775,745 687,755,742,707 705,768,710,758 738,780,758,765 745,768,760,755 733,765,752,745 733,762,750,755 742,762,755,752 740,765,755,758 748,768,758,760 755,785,762,778 770,803,782,795 766,805,792,785 758,795,780,775 762,800,778,788 785,845,790,790 770,820,790,785 713,795,782,745 735,790,745,765 675,828,768,748 685,755,745,752 605,752,752,632 608,705,635,640 535,672,628,642 497,748,645,712 618,738,700,665 630,700,665,672 590,700,668,600 597,720,603,718 717,765,720,760 760,792,765,787',
    lines: 'o,109,286,188 o,109,286,202 o,109,286,218 o,303,752,392 o,303,752,434 o,303,752,476 T,107,292,450 D,675,755,496 T,303,755,628 D,107,292,630 Z,107,292,653 G,107,290,682 o,109,286,695 G,107,290,710 r,109,292,710 D,663,672,533 D,639,660,605 D,615,636,674 D,403,612,685 D,355,400,713 D,331,352,731 D,295,328,742 r,303,755,754 G,303,753,782 D,295,303,768 D,307,375,802 D,379,565,809 D,568,755,847 o,303,752,825 G,303,753,867 T,107,292,915 D,107,292,1050 Z,107,292,1104 T,303,755,1104 o,109,286,1119 o,109,286,1134 o,109,286,1148 o,303,752,1344 o,303,752,1386 o,303,752,1429',
    times: '12:40@42 15:00@77 18:20@112 20:40@147 19@190 03:40@253 06:00@287 08:20@322 10:40@358 13:00@392 15:20@428 17:40@463 20:00@497',
    ticks: [...range(27, 35, 5), 183, ...range(202, 35, 10), 543],
    prices: range(3220, -10, 24).map(v => `1,${v}`),
    first: 55, gap: 23.95, last: '1,3118', tagY: 300
  },
  {
    title: '@YMM12 - 15 Minutes - IQFeed',
    sx: 2.458, sy: 2.34, ox: 20, oy: 37, step: 4, session: 172,
    axis: 48, box: { right: 5, width: 211 },
    stats: '13057.00 12957.00 12964.00 100.00 97.00 188.40 13057.00 12957.00 100.00 74.00 101.60 62.00 $310.00 13038.00 12952.00 86.00 86.00 121.80 13049.00 12952.00 12959.00 13000.50 12986.65 12972.81 13125.19 13111.35 13097.50 12931.19 12917.35 12903.50',
    bars: '813,878,860,853 850,918,853,915 885,965,918,960 935,1010,960,960 940,1010,962,942 832,965,945,848 820,878,850,848 820,878,850,850 758,872,845,818 808,910,820,897 895,962,897,902 885,990,900,970 918,1088,970,1052 1012,1062,1050,1032 992,1045,1035,1008 995,1032,1008,1000 990,1018,998,1000 990,1020,1000,1005 992,1020,1005,1000 992,1022,1000,1015 970,1022,1018,980 972,995,980,985 978,1022,985,1015 988,1022,1015,1005 985,1025,1005,1020 935,1028,1020,940 925,965,942,938 928,960,940,925 905,938,928,920 905,932,920,912 882,920,912,908 908,978,912,960 935,1008,960,978 955,988,978,960 825,960,958,925 905,938,925,915 905,930,918,918 902,935,918,915 900,950,918,938 925,950,940,938 925,945,938,932 928,962,935,955 952,980,960,968 945,975,968,958 938,975,958,940 910,945,940,920 900,942,925,925 908,935,925,922 905,935,925,922 885,998,920,932 890,942,925,897 845,898,897,850 810,855,850,830 650,838,832,720 670,745,720,705 692,805,702,720 660,755,720,702 645,755,700,655 595,685,655,665 515,755,662,648 628,828,650,690 650,812,690,775 682,780,775,725 650,735,722,660 578,690,660,595 592,680,597,665 650,705,665,692 628,710,692,685 682,750,685,705',
    lines: 'o,179,715,137 o,179,715,214 o,179,715,289 T,49,172,440 M,49,172,557 Y,49,172,615 r,51,162,684 G,49,170,833 M,49,172,961 o,51,162,986 Y,49,74,990 Y,74,162,1011 Y,162,172,1088 G,49,170,1138 M,624,723,512 T,180,723,554 M,614,624,594 M,605,614,643 M,565,605,648 M,555,565,809 M,378,555,825 M,339,378,880 M,319,339,908 M,300,319,924 M,290,300,936 M,251,290,969 M,241,251,973 M,202,241,990 M,182,202,994 M,172,182,1011 G,179,720,822 o,179,715,897 G,179,720,975 r,172,723,1023 M,172,723,1062 T,180,723,1088 o,179,715,1204 o,179,715,1279 o,179,715,1356',
    times: '13:45@41 16:15@77 19:00@113 21:15@149 19@185 04:00@256 06:15@292 08:30@328 10:45@364 13:00@400 15:15@436 17:30@473 19:45@508',
    ticks: [...range(25, 36, 5), 178, ...range(205, 36, 10)],
    prices: range(13110, -10, 24).map(v => `${v / 1000 | 0}.${String(v % 1000).padStart(3, '0')}`),
    first: 57, gap: 23.49, last: '13.022', tagY: 265
  }
];

function plot(c) {
  const px = v => Math.round(v / c.sx - c.ox);
  const py = v => Math.round(v / c.sy - c.oy);
  let bars = '';
  c.bars.split(' ').forEach((b, i) => {
    const [hi, lo, open, close] = b.split(',').map(py);
    const x = 2 + c.step * i;
    bars += `M${x + 0.5} ${hi}V${lo + 1}M${x - 2} ${open + 0.5}h2M${x + 1} ${close + 0.5}h${c.step - 2}`;
  });
  const lines = c.lines.split(' ').map(l => {
    const [code, x1, x2, y] = l.split(',');
    const thick = 'TMDYZ'.includes(code);
    return `<path class="${STYLES[code]}" d="M${px(x1)} ${py(y) + (thick ? 0 : 0.5)}H${px(x2)}"/>`;
  }).join('');
  const divider = Math.floor(c.session / c.sx - c.ox);
  return `<path class="session" d="M${divider + 0.5} 0V602"/><path class="bar" d="${bars}"/>${lines}`;
}

function priceText(c, label, x, y, cls = '') {
  if (!c.fraction) return `<text class="${cls}" x="${x}" y="${y}">${label}</text>`;
  const [whole, num] = label.split(' ');
  return `<text class="${cls}" x="${x}" y="${y}">${whole} <tspan dy="-2">${num}</tspan><tspan dy="2">/</tspan><tspan dy="2">32</tspan></text>`;
}

function priceAxis(c) {
  const w = c.axis;
  let ticks = '';
  for (let y = c.first - c.gap, n = 0; y < 602; y += c.gap / 2, n++) {
    ticks += `M0 ${Math.round(y) + 0.5}h${n % 2 ? 1 : 3}`;
  }
  const labels = c.prices.map((p, i) => priceText(c, p, 6, Math.round(c.first + c.gap * i) + 4)).join('');
  const t = c.tagY;
  return `<path class="tick" d="${ticks}"/>${labels}
    <path class="tag" d="M1 ${t}l7-6H${w - 2}v13H8z"/>${priceText(c, c.last, 8, t + 5, 'tagtext')}
    <path class="tag" d="M${w - 34} ${t + 8}h32v12h-32z"/><text class="tagtext" x="${w - 31}" y="${t + 18}">06:21</text>
    <path d="M${w - 26.500} 14.500h4v8h-4zM${w - 26} 16.500h3M${w - 26} 18.500h3M${w - 26} 20.500h3M${w - 18} 18.500h5M${w - 17} 17.500h1M${w - 17} 19.500h1M${w - 16} 16.500h1M${w - 16} 20.500h1" stroke="#fff"/>`;
}

function timeAxis(c) {
  const ticks = c.ticks.map(x => `M${x + 0.5} 0v2`).join('');
  const labels = c.times.split(' ').map(t => {
    const [label, x] = t.split('@');
    return `<text x="${x}" y="13">${label}</text>`;
  }).join('');
  return `<path class="tick" d="${ticks}"/>${labels}`;
}

function statsRows(c) {
  const values = c.stats.split(' ');
  return LABELS.map(name => name.length > 1
    ? `<tr><td class="name">${name}</td><td class="dash">-</td><td>${values.shift()}</td></tr>`
    : `<tr><td class="name">${name}</td><td></td><td></td></tr>`).join('');
}

const host = document.getElementById('windows');
const template = document.getElementById('window-template');
for (const c of CHARTS) {
  const win = template.content.cloneNode(true);
  const $ = s => win.querySelector(s);
  $('.title').textContent = c.title;
  if (c.active) $('.window').classList.add('active');
  $('.plot > svg').innerHTML = plot(c);
  $('.prices').style.width = `${c.axis}px`;
  $('.prices').innerHTML = priceAxis(c);
  $('.times').innerHTML = timeAxis(c);
  const table = $('.stats');
  table.style.right = `${c.box.right}px`;
  table.style.width = `${c.box.width}px`;
  table.tBodies[0].innerHTML = statsRows(c);
  if (c.scroll) {
    $('.client').insertAdjacentHTML('beforeend',
      '<div class="scroll"><button aria-label="Scroll left"><svg viewBox="0 0 4 8"><path d="M4 0v8L0 4z"/></svg></button><div class="track"><div class="thumb"></div></div><button aria-label="Scroll right"><svg viewBox="0 0 4 8"><path d="M0 0v8l4-4z"/></svg></button></div>');
  }
  host.append(win);
}
```
